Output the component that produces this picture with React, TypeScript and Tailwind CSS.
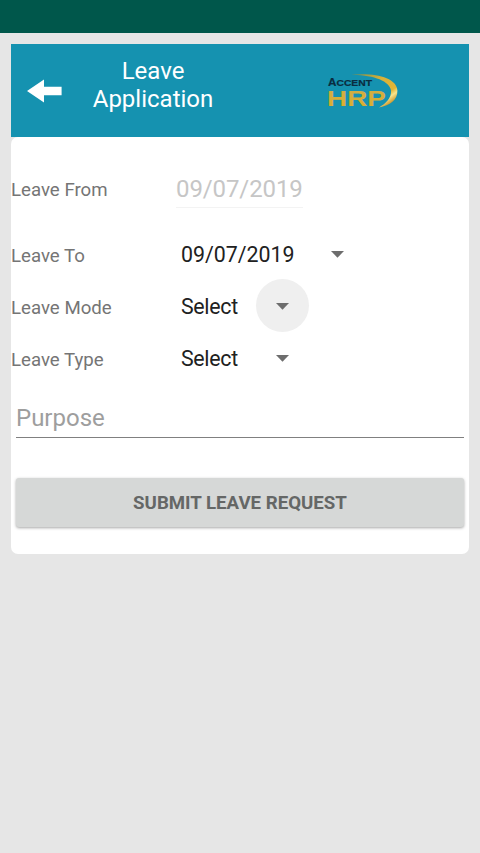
type FieldProps = {
  label: string;
  value: string;
  wide?: boolean;
  pressed?: boolean;
};

const Caret = () => (
  <svg width="13" height="7" viewBox="0 0 13 7" className="fill-[#6d6d6d]">
    <path d="M0 0H13L6.5 6.7Z" />
  </svg>
);

const BackArrow = () => (
  <svg width="35" height="24" viewBox="0 0 35 24" className="fill-white">
    <path d="M0 12L17 0.4V7.8H34.6V16.2H17V23.6Z" />
  </svg>
);

const Logo = () => (
  <svg width="76" height="40" viewBox="0 0 76 40">
    <defs>
      <linearGradient id="swoosh" x1="0" y1="0" x2="1" y2="1">
        <stop offset="0" stopColor="#6f8a50" />
        <stop offset="0.4" stopColor="#d9b23a" />
        <stop offset="0.68" stopColor="#e2b535" />
        <stop offset="0.76" stopColor="#f8e68e" />
        <stop offset="0.88" stopColor="#c98f22" />
      </linearGradient>
      <linearGradient id="letters" x1="0" y1="0" x2="0" y2="1">
        <stop offset="0" stopColor="#cfae48" />
        <stop offset="1" stopColor="#dcae2c" />
      </linearGradient>
    </defs>
    <path
      d="M23 4.2C46 1 71 6 71.4 19.5C71.8 28.5 64 34.8 53 36.4C60 32.5 65.6 27 65 19.5C63.8 10 46 3.2 23 4.2Z"
      fill="url(#swoosh)"
    />
    <text
      x="2"
      y="15"
      textLength="44"
      lengthAdjust="spacingAndGlyphs"
      fill="#0a2c40"
      stroke="#0a2c40"
      strokeWidth="0.2"
      className="font-['Liberation_Sans',sans-serif] text-[10.5px] font-bold"
    >
      A<tspan className="text-[9.3px]">CCENT</tspan>
    </text>
    <text
      x="1"
      y="34.5"
      textLength="59"
      lengthAdjust="spacingAndGlyphs"
      fill="url(#letters)"
      className="font-['Liberation_Sans',sans-serif] text-[22.5px] font-bold"
    >
      HRP
    </text>
  </svg>
);

const SpinnerField = ({ label, value, wide, pressed }: FieldProps) => (
  <div className="flex h-[52px] items-center">
    <span className="w-[170px] pt-0.5 text-[18.67px] text-[#757575]">{label}</span>
    <span
      className={`text-[21.33px] text-[#212121] ${
        wide ? "w-[130px]" : "w-[75px] tracking-[-0.3px]"
      }`}
    >
      {value}
    </span>
    <span
      className={`mb-[3px] flex size-[53px] shrink-0 items-center justify-center rounded-full pt-0.5 ${
        pressed ? "bg-[#efefef]" : ""
      }`}
    >
      <Caret />
    </span>
  </div>
);

const App = () => {
  return (
    <div className="min-h-screen bg-[#e6e6e6] font-[Roboto,sans-serif]">
      <div className="h-[33px] bg-[#00574b]" />

      <main className="px-[11px] pt-[11px]">
        <header className="flex h-[93px] items-center bg-[#1592b0]">
          <button className="ml-4 w-[35px]" aria-label="Back">
            <BackArrow />
          </button>
          <h1 className="ml-[21px] w-[140px] pb-3 text-center text-[24px] leading-7 text-white">
            Leave Application
          </h1>
          <div className="ml-[103px]">
            <Logo />
          </div>
        </header>

        <form className="h-[417px] rounded-[7px] bg-white">
          <div className="flex h-[92px] items-center pt-3.5">
            <span className="w-[165px] text-[18.67px] text-[#757575]">Leave From</span>
            <span className="border-b border-[#f3f3f3] pb-0.5 text-[24px] leading-8 tracking-[-0.1px] text-[#c6c6c6]">
              09/07/2019
            </span>
          </div>
          <SpinnerField label="Leave To" value="09/07/2019" wide />
          <SpinnerField label="Leave Mode" value="Select" pressed />
          <SpinnerField label="Leave Type" value="Select" />

          <div className="mx-[5px] mt-[13px] flex h-10 items-center border-b-[1.5px] border-[#808080]">
            <input
              className="w-full text-[24px] outline-none placeholder:text-[#9e9e9e]"
              placeholder="Purpose"
            />
          </div>

          <button
            type="button"
            className="mx-[5px] mt-10 h-[49px] w-[448px] rounded-[3px] bg-[#d6d8d7] pt-px text-[18.67px] font-bold text-[#656766] shadow-[0_1px_3px_rgba(0,0,0,0.35)]"
          >
            SUBMIT LEAVE REQUEST
          </button>
        </form>
      </main>
    </div>
  );
};

export default App;
